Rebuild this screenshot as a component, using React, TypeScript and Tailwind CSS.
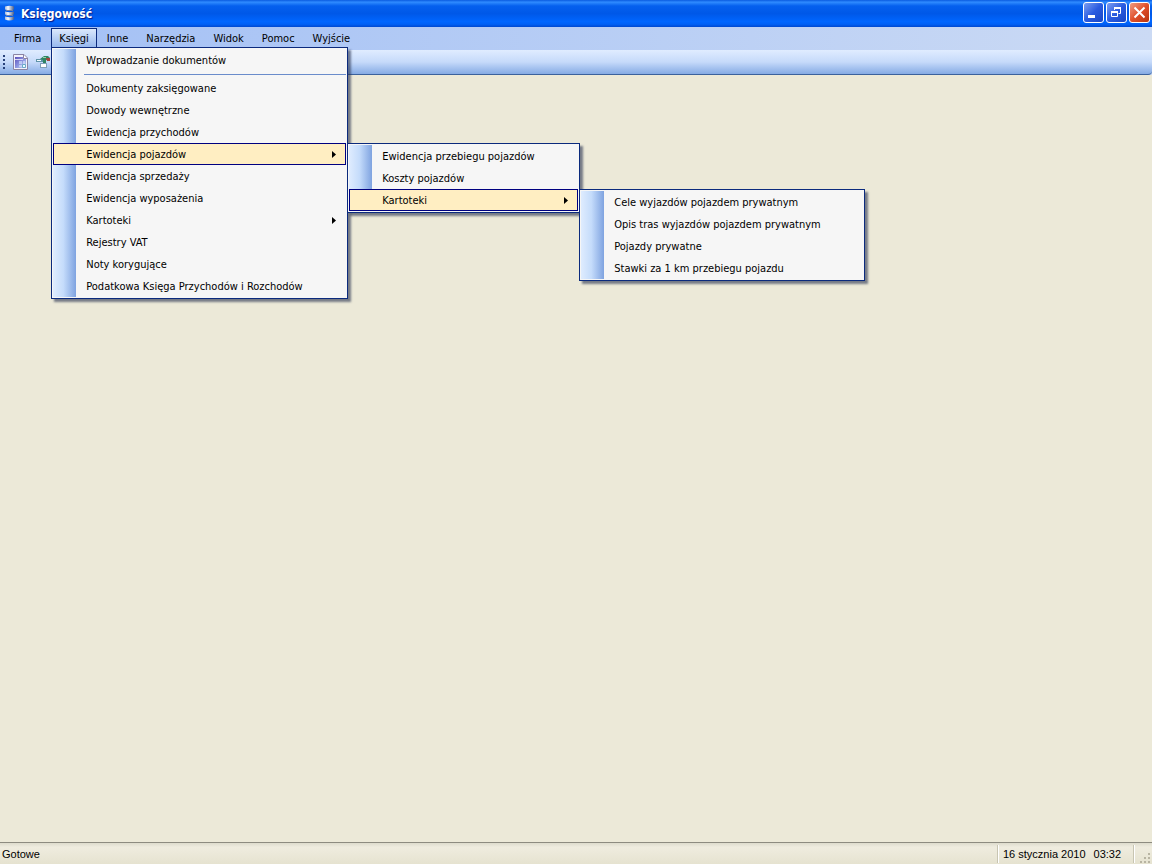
import type { ReactNode } from 'react';

type Item = {
  label: string;
  open?: boolean;
  width?: string;
  children?: Item[];
};

const topMenu = ['Firma', 'Księgi', 'Inne', 'Narzędzia', 'Widok', 'Pomoc', 'Wyjście'];

const vehicleFiles: Item[] = [
  { label: 'Cele wyjazdów pojazdem prywatnym' },
  { label: 'Opis tras wyjazdów pojazdem prywatnym' },
  { label: 'Pojazdy prywatne' },
  { label: 'Stawki za 1 km przebiegu pojazdu' },
];

const vehicles: Item[] = [
  { label: 'Ewidencja przebiegu pojazdów' },
  { label: 'Koszty pojazdów' },
  { label: 'Kartoteki', open: true, width: 'w-[286px]', children: vehicleFiles },
];

const books: Item[] = [
  { label: 'Wprowadzanie dokumentów' },
  { label: '-' },
  { label: 'Dokumenty zaksięgowane' },
  { label: 'Dowody wewnętrzne' },
  { label: 'Ewidencja przychodów' },
  { label: 'Ewidencja pojazdów', open: true, width: 'w-[233px]', children: vehicles },
  { label: 'Ewidencja sprzedaży' },
  { label: 'Ewidencja wyposażenia' },
  { label: 'Kartoteki', children: [] },
  { label: 'Rejestry VAT' },
  { label: 'Noty korygujące' },
  { label: 'Podatkowa Księga Przychodów i Rozchodów' },
];

function Menu({ items, className }: { items: Item[]; className: string }) {
  return (
    <ul
      role="menu"
      className={`absolute z-10 border border-[#0b2a7d] bg-[#f6f6f6] bg-[linear-gradient(to_right,#dfecfe,#c5dcfb_45%,#7fa3e0)] bg-[length:23px_100%] bg-no-repeat bg-origin-content p-px shadow-[3px_3px_2px_rgba(40,50,80,0.6)] ${className}`}
    >
      {items.map((item, i) =>
        item.label === '-' ? (
          <li key={i} role="separator" className="mt-[3px] mb-0.5 ml-[31px] h-px bg-[#6a8ccb]" />
        ) : (
          <li key={i} role="none" className="relative">
            <button
              type="button"
              role="menuitem"
              className={`flex h-[22px] w-full items-center justify-between border pt-0.5 pr-[9px] pl-8 text-left whitespace-nowrap ${
                item.open ? 'border-[#000080] bg-[#ffeec2]' : 'border-transparent'
              }`}
            >
              {item.label}
              {item.children && (
                <svg width="4" height="8" viewBox="0 0 4 8" aria-hidden="true">
                  <path d="M0 0L4 3.5L0 7Z" />
                </svg>
              )}
            </button>
            {item.open && item.children && (
              <Menu items={item.children} className={`top-0 left-full ml-px ${item.width}`} />
            )}
          </li>
        ),
      )}
    </ul>
  );
}

function CaptionButton({
  label,
  className,
  children,
}: {
  label: string;
  className: string;
  children: ReactNode;
}) {
  return (
    <button
      type="button"
      aria-label={label}
      className={`size-[21px] rounded-[3px] border border-white ${className}`}
    >
      <svg width="19" height="19" viewBox="0 0 19 19" fill="none" stroke="#fff">
        {children}
      </svg>
    </button>
  );
}

const blueButton = 'bg-linear-to-br from-[#7d9df0] via-[#2a5be0] to-[#1846c4]';
const redButton = 'bg-linear-to-br from-[#ee9a80] via-[#e0502a] to-[#b8330c]';

function TitleBar() {
  return (
    <header className="flex h-[27px] items-center gap-[7px] bg-[linear-gradient(to_bottom,#0a5be0,#2f8bff_8%,#0560ee_22%,#0058e8_50%,#0066ff_80%,#0060f5_90%,#0048d0)] pr-0.5 pl-[5px]">
      <svg width="9" height="17" viewBox="0 0 9 17" aria-hidden="true">
        <defs>
          <linearGradient id="drum">
            <stop offset="0" stopColor="#a9bbd8" />
            <stop offset="0.35" stopColor="#f4f8ff" />
            <stop offset="1" stopColor="#4a5c86" />
          </linearGradient>
        </defs>
        <path d="M0 1.500Q4.500 0 9 1.500V4.500Q4.500 6 0 4.500Z" fill="url(#drum)" />
        <path d="M0 6.500Q4.500 8 9 6.500V9.500Q4.500 11 0 9.500Z" fill="url(#drum)" />
        <path d="M0 11.500Q4.500 13 9 11.500V14.500Q4.500 16.500 0 14.500Z" fill="url(#drum)" />
        <path d="M1 5.500H8M1 10.500H8" stroke="#6c7fa8" />
      </svg>
      <h1 className="flex-1 font-[DejaVu_Sans_Condensed,DejaVu_Sans,sans-serif] text-xs font-bold text-white [text-shadow:1px_1px_1px_#0a1883]">
        Księgowość
      </h1>
      <div className="mt-0.5 flex gap-0.5 self-start">
        <CaptionButton label="Minimalizuj" className={blueButton}>
          <path d="M4 13.5H11" strokeWidth="3" />
        </CaptionButton>
        <CaptionButton label="Przywróć" className={blueButton}>
          <path d="M7.500 7V4.500H13.500V10.500H11.500" />
          <path d="M7 5H14" strokeWidth="2" />
          <path d="M4.500 8.500H10.500V13.500H4.500Z" />
          <path d="M4 9H11" strokeWidth="2" />
        </CaptionButton>
        <CaptionButton label="Zamknij" className={redButton}>
          <path d="M4.500 4.500L14.500 14.500M14.500 4.500L4.500 14.500" strokeWidth="2" />
        </CaptionButton>
      </div>
    </header>
  );
}

function MenuBar() {
  return (
    <nav className="flex h-[23px] gap-0.5 bg-linear-to-r from-[#a3c0f5] to-[#cbdaf4] pt-px pl-1.5">
      {topMenu.map((label) => {
        const open = label === 'Księgi';
        return (
          <div key={label} className="relative h-5">
            <button
              type="button"
              aria-haspopup="menu"
              aria-expanded={open}
              className={`h-full border border-b-0 px-[7px] pt-px ${
                open
                  ? 'border-[#0b2a7d] bg-linear-to-b from-[#dbe8fc] to-[#93b5ec]'
                  : 'border-transparent'
              }`}
            >
              {label}
            </button>
            {open && <Menu items={books} className="top-[19px] left-0 w-[297px]" />}
          </div>
        );
      })}
    </nav>
  );
}

function ToolBar() {
  return (
    <div className="bg-[#cbdaf4]">
      <div className="flex h-[25px] items-center rounded-br border-b border-[#3b619c] bg-linear-to-b from-[#e0ecff] via-[#c6dafa] to-[#86abe4] pl-[3px]">
        <svg width="2" height="16" viewBox="0 0 2 16" fill="#27417a" aria-hidden="true">
          <path d="M0 1h2v2H0zM0 5h2v2H0zM0 9h2v2H0zM0 13h2v2H0z" />
        </svg>
        <button type="button" aria-label="Dokumenty" className="ml-[7px]">
          <svg width="16" height="16" viewBox="0 0 16 16">
            <defs>
              <linearGradient id="sheet" x1="0" y1="0" x2="1" y2="1">
                <stop offset="0" stopColor="#5c50b8" />
                <stop offset="0.5" stopColor="#8b93e0" />
                <stop offset="1" stopColor="#c8e0f8" />
              </linearGradient>
            </defs>
            <path d="M1.500 .5H12L15.500 4V15.500H1.500Z" fill="#f2f1fb" stroke="#8a84a4" />
            <path d="M3 3H11V5H14V14H3Z" fill="url(#sheet)" />
            <path d="M3 5.500H11" stroke="#d9d8f4" />
            <path d="M7 7H10V10H7ZM11 7H13V10H11ZM7 11H10V13H7Z" fill="#dbe9ff" fillOpacity="0.6" />
            <path d="M10.500 10.500H13.500V13.500H10.500Z" fill="#e8fbff" stroke="#6aa8c8" />
            <path d="M11.500 1V4.500H15" fill="#fff" stroke="#8a84a4" />
          </svg>
        </button>
        <button type="button" aria-label="Księgowanie" className="ml-[7px]">
          <svg width="16" height="16" viewBox="0 0 16 16">
            <path d="M1 5H8V8H1Z" fill="#5f93a8" />
            <path d="M2 6H6V7H2Z" fill="#f4fbff" />
            <path d="M5 9H12V14H5Z" fill="#7f9fb8" />
            <path d="M6 10H11V13H6Z" fill="#fff" />
            <path d="M5 5L9 2H13L15 4V6H11V9H8V6Z" fill="#2f8562" />
            <path d="M8 3H11V4H8Z" fill="#9bd0a8" />
            <path d="M11 4H15V7H12Z" fill="#a5453c" />
          </svg>
        </button>
      </div>
    </div>
  );
}

function StatusBar() {
  return (
    <footer className="flex h-[22px] items-center border-t border-[#8d8b80] bg-linear-to-b from-[#dedccd] via-[#efecdf] via-20% to-[#e6e3d0] font-[Liberation_Sans,Arial,sans-serif]">
      <span className="flex-1 pt-0.5 pl-0.5">Gotowe</span>
      <span className="flex h-[18px] w-[137px] items-center gap-2 border-x border-[#c8c5b2] pt-0.5 pl-[5px] shadow-[inset_1px_0_#fff,1px_0_#fff]">
        <span>16 stycznia 2010</span>
        <span>03:32</span>
      </span>
      <svg width="18" height="20" viewBox="0 0 18 20" fill="#b8b4a2" aria-hidden="true">
        <path d="M14 9h2v2h-2zM10 13h2v2h-2zM14 13h2v2h-2zM6 17h2v2H6zM10 17h2v2h-2zM14 17h2v2h-2z" />
      </svg>
    </footer>
  );
}

export default function App() {
  return (
    <div className="flex min-h-screen flex-col bg-[#ece9d8] font-[DejaVu_Sans_Condensed,DejaVu_Sans,sans-serif] text-[11px] text-black">
      <TitleBar />
      <MenuBar />
      <ToolBar />
      <main className="flex-1" />
      <StatusBar />
    </div>
  );
}
